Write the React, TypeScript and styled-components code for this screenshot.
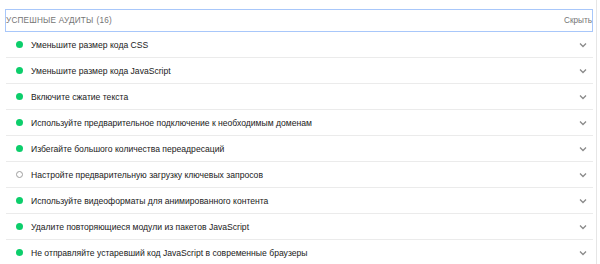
import React from "react";
import styled, { createGlobalStyle } from "styled-components";

const Global = createGlobalStyle`
  html, body { margin: 0; padding: 0; background: #fff; }
  body { font-family: "Liberation Sans", Arial, sans-serif; }
`;

const Frame = styled.div`
  width: 597px;
  height: 264px;
  border-right: 1px solid #e6e6e6;
  box-sizing: border-box;
  padding: 9px 3px 0 5px;
  overflow: hidden;
`;

const Header = styled.div`
  height: 23px;
  box-sizing: border-box;
  border: 1px solid #a8c7fa;
  display: flex;
  align-items: center;
  justify-content: space-between;
`;

const Title = styled.span`
  font-size: 8.2px;
  color: #757575;
  text-transform: uppercase;
  letter-spacing: 0.2px;
`;

const Count = styled.span`
  margin-left: 3px;
`;

const Toggle = styled.span`
  font-size: 8.2px;
  color: #757575;
`;

const Row = styled.div`
  height: 26px;
  box-sizing: border-box;
  margin-left: 1px;
  border-bottom: 1px solid #ebebeb;
  display: flex;
  align-items: center;
  padding: 0 6px 0 10px;
`;

const Dot = styled.span<{ $pass: boolean }>`
  width: 7px;
  height: 7px;
  border-radius: 50%;
  box-sizing: border-box;
  flex: none;
  background: ${(p) => (p.$pass ? "#0cce6b" : "transparent")};
  border: ${(p) => (p.$pass ? "none" : "1px solid #9e9e9e")};
`;

const Label = styled.span`
  flex: 1;
  margin-left: 8px;
  font-size: 8.6px;
  color: #212121;
`;

const Chevron = () => (
  <svg width="8" height="6" viewBox="0 0 8 6">
    <path d="M1 1.5 L4 4.5 L7 1.5" fill="none" stroke="#8a8a8a" strokeWidth="1.3" />
  </svg>
);

const audits: { t: string; pass: boolean }[] = [
  { t: "Уменьшите размер кода CSS", pass: true },
  { t: "Уменьшите размер кода JavaScript", pass: true },
  { t: "Включите сжатие текста", pass: true },
  { t: "Используйте предварительное подключение к необходимым доменам", pass: true },
  { t: "Избегайте большого количества переадресаций", pass: true },
  { t: "Настройте предварительную загрузку ключевых запросов", pass: false },
  { t: "Используйте видеоформаты для анимированного контента", pass: true },
  { t: "Удалите повторяющиеся модули из пакетов JavaScript", pass: true },
  { t: "Не отправляйте устаревший код JavaScript в современные браузеры", pass: true },
];

export default function App() {
  return (
    <>
      <Global />
      <Frame>
        <Header>
          <Title>
            Успешные аудиты<Count>(16)</Count>
          </Title>
          <Toggle>Скрыть</Toggle>
        </Header>
        {audits.map((a) => (
          <Row key={a.t}>
            <Dot $pass={a.pass} />
            <Label>{a.t}</Label>
            <Chevron />
          </Row>
        ))}
      </Frame>
    </>
  );
}
